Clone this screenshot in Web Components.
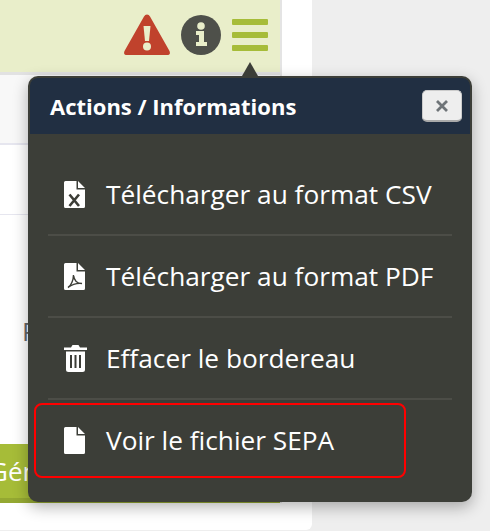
<!DOCTYPE html>
<html><head><meta charset="utf-8"><style>
html,body{margin:0;padding:0;height:531px;overflow:hidden;background:#eee;font-family:"Open Sans",sans-serif}
</style></head><body>
<app-page>
<pop-menu title-text="Actions / Informations">
<menu-row icon="csv">Télécharger au format CSV</menu-row>
<menu-row icon="pdf">Télécharger au format PDF</menu-row>
<menu-row icon="trash">Effacer le bordereau</menu-row>
<menu-row icon="file" last>Voir le fichier SEPA</menu-row>
</pop-menu>
</app-page>
<script>
const doc='M0 1.5Q0 0 1.5 0H12.500V8.500H21V25.500Q21 27 19.500 27H1.500Q0 27 0 25.500Z M14 0L21 7H14Z';
const icons={
csv:`<svg width="21" height="27" viewBox="0 0 21 27"><path fill="#fff" d="${doc}"/><path fill="none" stroke="#3c3d37" stroke-width="2.600" d="M5.500 13.500L15 25M15 13.500L5.500 25"/></svg>`,
pdf:`<svg width="21" height="27" viewBox="0 0 21 27"><path fill="#fff" d="${doc}"/><path fill="none" stroke="#3c3d37" stroke-width="1.400" d="M4 24.500C7 23 9.500 17 9.500 12C10 17 13 20.500 18 20.500C13 20 8 21.500 4 24.500Z"/></svg>`,
trash:`<svg width="23" height="27" viewBox="0 0 23 27"><path fill="#fff" d="M0 2.500H7L8.500 0H14.500L16 2.500H23V5H0Z M2 6.500H21V24.500Q21 27 18.500 27H4.500Q2 27 2 24.500Z"/><path stroke="#3c3d37" stroke-width="2" d="M7 10V23M11.500 10V23M16 10V23"/></svg>`,
file:`<svg width="21" height="27" viewBox="0 0 21 27"><path fill="#fff" d="${doc}"/></svg>`};
function def(n,html){customElements.define(n,class extends HTMLElement{constructor(){super();this.attachShadow({mode:'open'}).innerHTML=typeof html==='function'?html(this):html}})}
def('app-page',`<style>
:host{display:block;width:490px;height:531px;position:relative}
.sheet{width:312px;height:530px;background:#fff;border-bottom-right-radius:6px;display:flex;flex-direction:column}
.card{width:282px;box-sizing:border-box;border-right:2px solid #e4e4e4;flex:none;height:503px;display:flex;flex-direction:column}
.head{height:72px;background:#e9eeca;border-bottom:3px solid #e2e2e2;display:flex;justify-content:flex-end;align-items:flex-start;padding-right:12px}
.r1{height:68px;border-bottom:2px solid #e6e6ef;background:#f8f8f8}
.r2{height:69px;border-bottom:1px solid #e6e6ef}
.r3{flex:1;font-size:26px;color:#666;padding:98px 0 0 22px;line-height:36px;box-sizing:border-box}
.btn{height:59px;background:#a6bc38;border-bottom:5px solid #94a832;box-sizing:border-box;color:#fff;font-size:26px;line-height:54px;text-indent:-11px;overflow:hidden;white-space:nowrap}
.ic{display:flex;gap:11px;align-items:center;padding:14px 0 0 0}
</style>
<div class="sheet"><div class="card">
<div class="head"><div class="ic">
<svg width="46" height="41" viewBox="0 0 46 41"><path fill="#c0422c" d="M23 .5Q25 .5 26 2.500L45.500 37Q47 41 43 41H3Q-1 41 .5 37L20 2.500Q21 .5 23 .5Z"/><path fill="#e9eeca" d="M19.500 12H26.500L25 27H21Z"/><circle cx="23" cy="32.500" r="4" fill="#e9eeca"/></svg>
<svg width="40" height="40" viewBox="0 0 40 40"><circle cx="20" cy="20" r="20" fill="#4e504a"/><path fill="#e9eeca" d="M15 16H23V27H26V31H15V27H18V20H15Z"/><circle cx="20" cy="11" r="3.800" fill="#e9eeca"/></svg>
<svg width="36" height="32" viewBox="0 0 36 32"><path fill="#a6bc38" d="M1 0H35Q36 0 36 1V5Q36 6 35 6H1Q0 6 0 5V1Q0 0 1 0Z M1 13H35Q36 13 36 14V18Q36 19 35 19H1Q0 19 0 18V14Q0 13 1 13Z M1 26H35Q36 26 36 27V31Q36 32 35 32H1Q0 32 0 31V27Q0 26 1 26Z"/></svg>
</div></div>
<div class="r1"></div><div class="r2"></div>
<div class="r3">P</div>
<div class="btn">Générer</div>
</div></div>
<slot></slot>`);
def('pop-menu',h=>`<style>
:host{display:block;position:absolute;left:28px;top:76px;width:444px;height:426px;box-sizing:border-box;background:#3c3e38;border-radius:10px;box-shadow:0 5px 15px rgba(0,0,0,.3);padding-top:2px}
.arrow{position:absolute;left:214px;top:-14px;width:0;height:0;border:8px solid transparent;border-top:0;border-bottom:14px solid #3c3e38}
.hd{height:56px;margin:0 2px;background:#212f42;border-radius:8px 8px 0 0;display:flex;align-items:center;justify-content:space-between;padding:0 8px 0 20px;font-weight:700;font-size:22px;color:#fff}
.x{width:40px;height:32px;box-sizing:border-box;background:#eee;border:1px solid #ccc;border-bottom:2px solid #aaa;border-radius:5px;display:flex;align-items:center;justify-content:center}
.bd{padding:20px 20px 0}
</style><div class="arrow"></div>
<div class="hd"><span>${h.getAttribute('title-text')}</span><span class="x"><svg width="12" height="12" viewBox="0 0 12 12"><path stroke="#6f7478" stroke-width="2.800" d="M1 1L11 11M11 1L1 11"/></svg></span></div>
<div class="bd"><slot></slot></div>`);
def('menu-row',h=>`<style>
:host{display:flex;height:80px;border-bottom:2px solid #4c4d47;align-items:center;color:#fff;font-size:26.250px;padding-left:16px;position:relative}
:host([last]){border-bottom:0}
:host([last])::after{content:"";position:absolute;left:-14px;width:368px;top:3px;height:71px;border:2px solid #f00;border-radius:8px}
.i{width:42px;flex:none;display:flex}
</style><span class="i">${icons[h.getAttribute('icon')]}</span><span><slot></slot></span>`);
</script></body></html>
